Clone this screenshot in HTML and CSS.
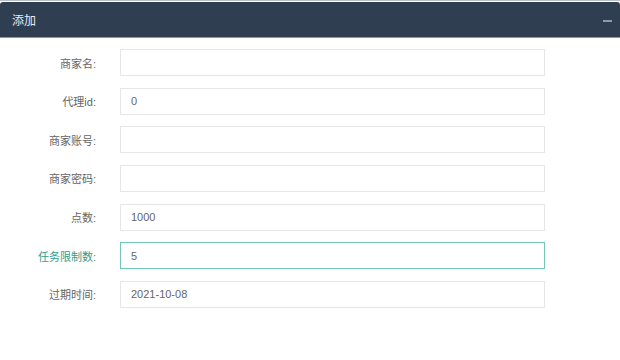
FILE: index.html
```html
<!DOCTYPE html>
<html lang="zh">
<head>
    <meta charset="UTF-8">
    <title>添加</title>
    <link rel="stylesheet" href="styles.css">
</head>
<body>
    <div class="layer">
        <div class="layer-title">
            <span>添加</span>
            <i class="layer-min"></i>
        </div>
        <form class="layer-form">
            <div class="form-item">
                <label>商家名:</label>
                <input type="text" value="">
            </div>
            <div class="form-item">
                <label>代理id:</label>
                <input type="text" value="0">
            </div>
            <div class="form-item">
                <label>商家账号:</label>
                <input type="text" value="">
            </div>
            <div class="form-item">
                <label>商家密码:</label>
                <input type="text" value="">
            </div>
            <div class="form-item">
                <label>点数:</label>
                <input type="text" value="1000">
            </div>
            <div class="form-item on">
                <label>任务限制数:</label>
                <input type="text" value="5">
            </div>
            <div class="form-item">
                <label>过期时间:</label>
                <input type="text" value="2021-10-08">
            </div>
        </form>
    </div>
</body>
</html>
```

FILE: styles.css
```css
body,form,label,input{margin:0;padding:0;}
body{
    background:#fff;
    font-family:"Liberation Sans","Noto Sans CJK SC",sans-serif;
    font-size:11px;
    color:#666;
}
.layer{
    width:620px;
    padding-top:1px;
    border-top:1px solid #b8bec6;
}
.layer-title{
    display:flex;
    align-items:center;
    justify-content:space-between;
    height:35px;
    padding:0 8px 0 12px;
    background:#2f3e50;
    border-radius:3px 3px 0 0;
    border-bottom:1px solid #8e99a6;
    color:#e8ecf0;
    font-size:12px;
}
.layer-min{
    display:block;
    width:9px;
    height:2px;
    margin-top:2px;
    background:#8f9aa6;
}
.layer-form{
    display:flex;
    flex-direction:column;
    gap:11.67px;
    padding-top:11px;
}
.form-item{
    display:flex;
    align-items:center;
}
.form-item label{
    width:96px;
    text-align:right;
    color:#666;
}
.form-item input{
    box-sizing:border-box;
    width:425px;
    height:27px;
    margin-left:24px;
    padding:0 10px;
    border:1px solid #e6e6e6;
    background:#fff;
    font-family:"Liberation Sans","Noto Sans CJK SC",sans-serif;
    font-size:11px;
    color:#666;
    outline:none;
}
.form-item.on label{
    color:#2e9e8c;
}
.form-item.on input{
    border-color:#72c7b8;
}
```
